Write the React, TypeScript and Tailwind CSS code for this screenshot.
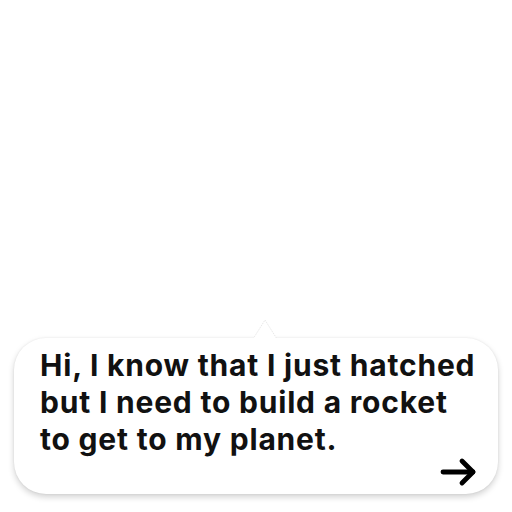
import React from "react";

const App = () => {
  return (
    <div className="w-[512px] h-[512px] bg-white flex flex-col justify-end px-[14px] pb-[18px]">
      {/* Speech bubble */}
      <div className="relative bg-white rounded-[32px] h-[156px] pl-[26px] pr-[4px] pt-[9px] shadow-[0_3px_6px_rgba(0,0,0,0.18),0_0_2px_rgba(0,0,0,0.08)]">
        {/* Tail */}
        <svg
          className="absolute left-[238px] top-[-19px]"
          width="26"
          height="20"
          viewBox="0 0 26 20"
        >
          <path d="M1 20 L13 1 L25 20 Z" fill="#fff" stroke="#e8e8e8" strokeWidth="1" strokeDasharray="1.5 1" />
          <rect x="0" y="19" width="26" height="2" fill="#fff" />
        </svg>

        <p
          className="text-[30px] leading-[37px] font-bold text-[#111] tracking-[0.8px] whitespace-nowrap"
          style={{ fontFamily: "Inter, 'Noto Sans', sans-serif" }}
        >
          Hi, I know that I just hatched
          <br />
          but I need to build a rocket
          <br />
          to get to my planet.
        </p>

        {/* Next arrow */}
        <svg
          className="absolute right-[21px] bottom-[7px]"
          width="37"
          height="30"
          viewBox="0 0 37 30"
          fill="none"
          stroke="#000"
          strokeWidth="4.8"
          strokeLinecap="round"
          strokeLinejoin="round"
        >
          <path d="M3 15 H33" />
          <path d="M22 4 L33 15 L22 26" />
        </svg>
      </div>
    </div>
  );
};

export default App;
